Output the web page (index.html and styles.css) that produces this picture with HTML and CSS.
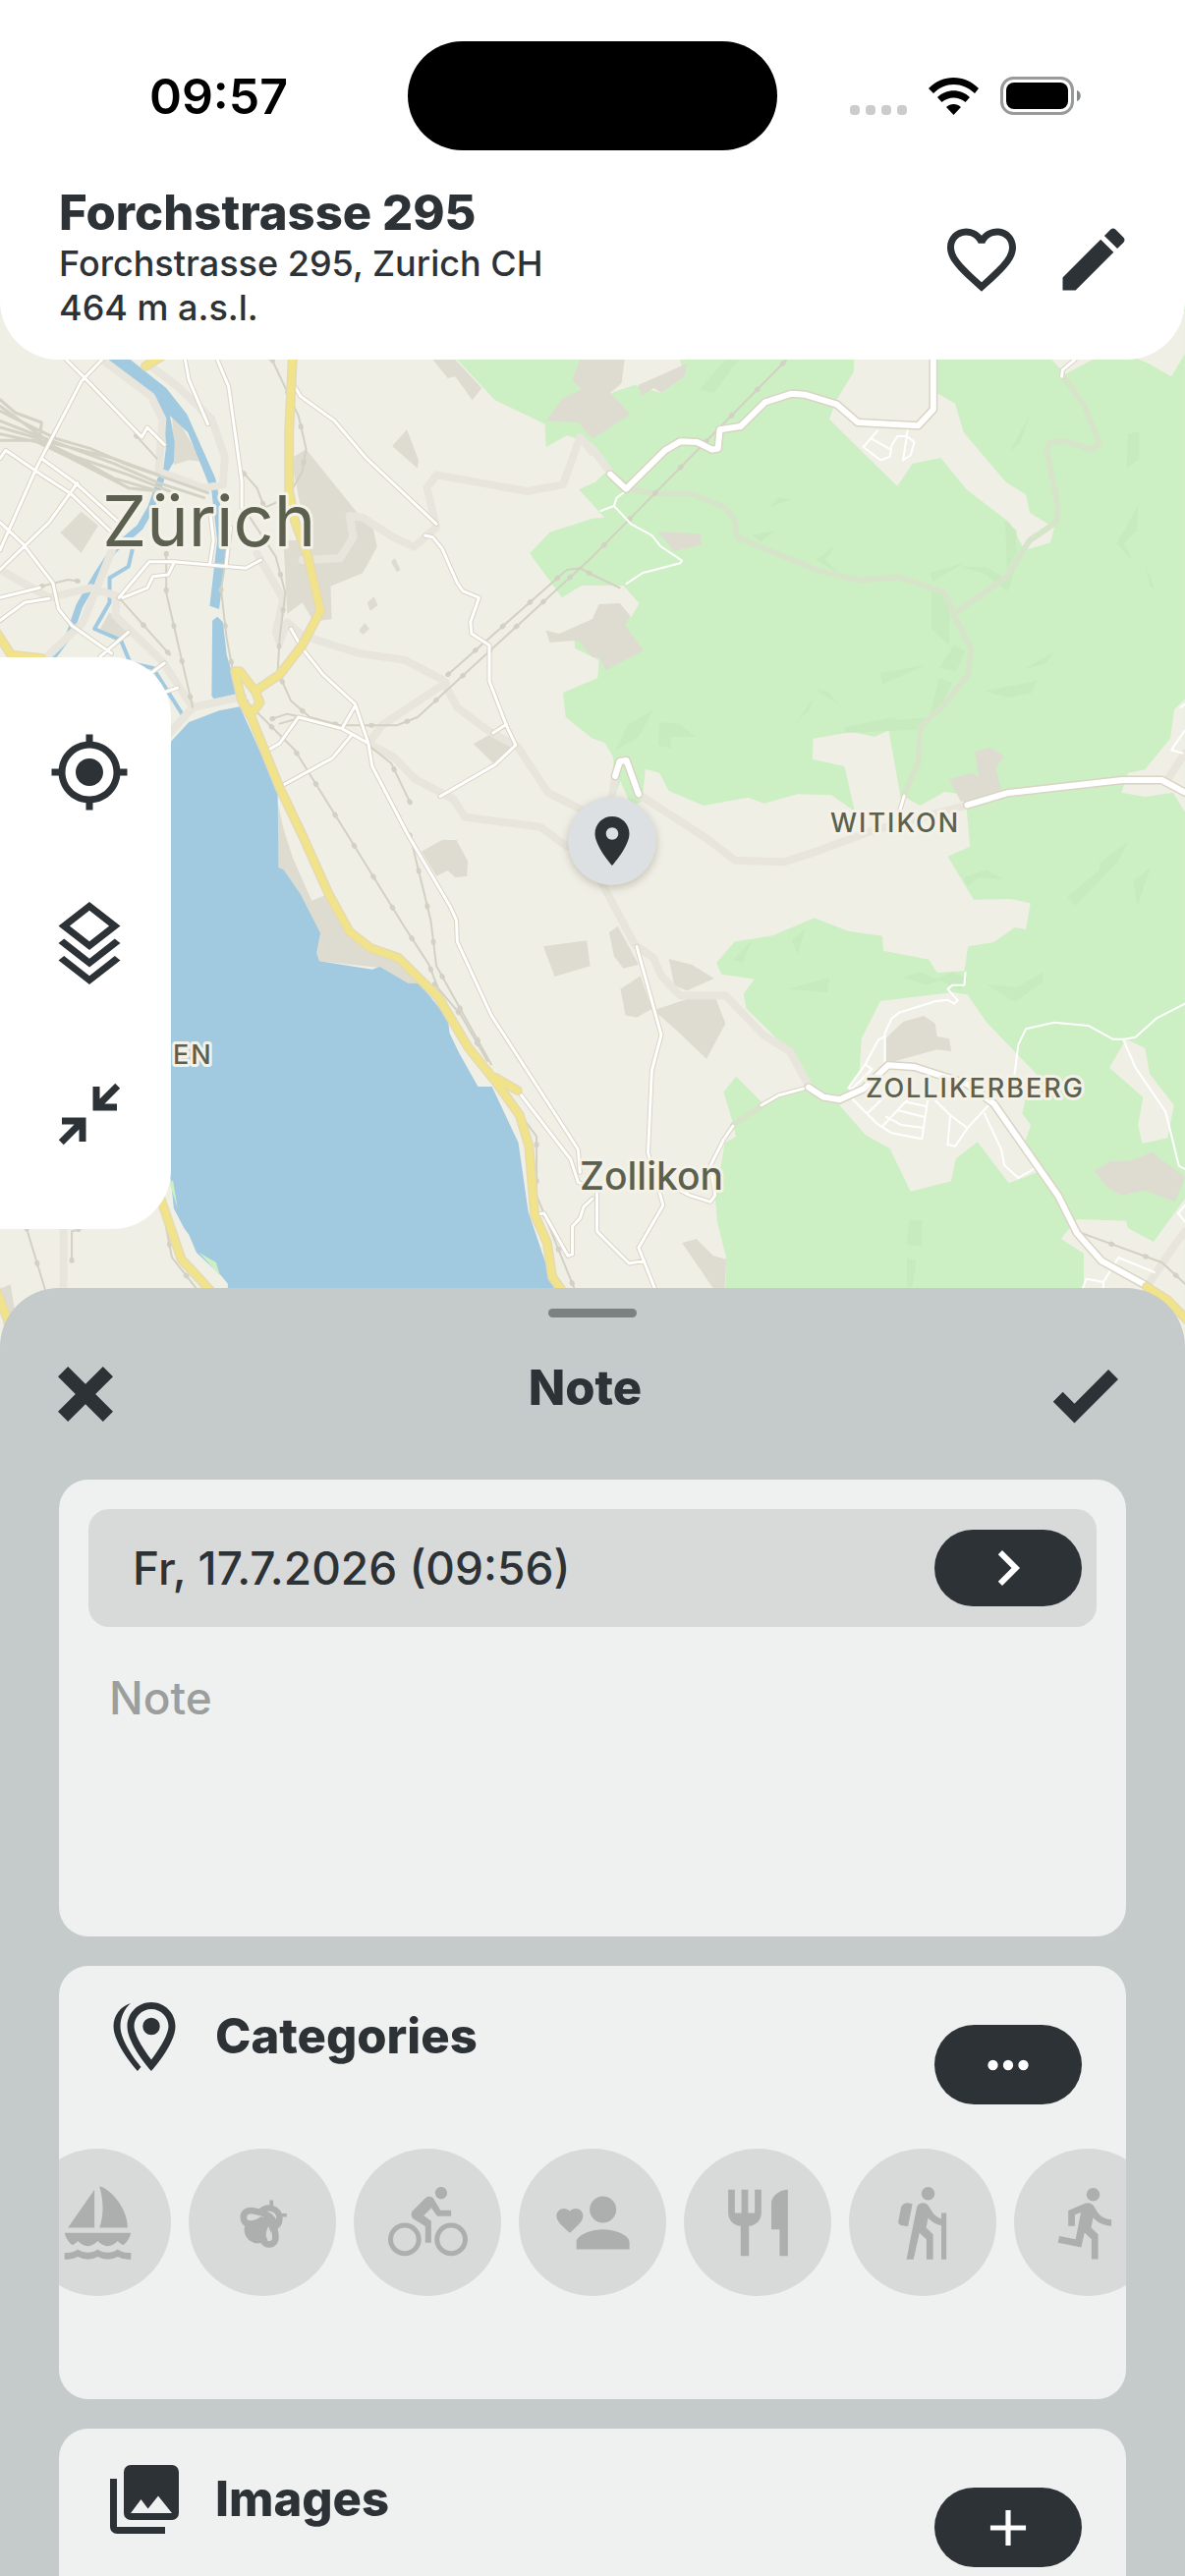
FILE: index.html
```html
<!DOCTYPE html>
<html lang="en">
<head>
<meta charset="utf-8">
<meta name="viewport" content="width=device-width, initial-scale=1">
<title>Note</title>
<link rel="stylesheet" href="styles.css">
</head>
<body>
<div class="app">
  <header class="top">
    <div class="status">
      <span class="status-time">09:57</span>
      <span class="island"></span>
      <div class="status-icons">
        <span class="cell"><i></i><i></i><i></i><i></i></span>
        <svg class="wifi" viewBox="0 0 51 38" aria-hidden="true"><path d="M0 11C14-3.600 37-3.600 51 11l-4 5C34 4 17 4 5 16zM9 20c9-9 24-9 33 0l-4.500 5c-7-6-17-6-24 0zM18 30c4-4 11-4 15 0l-7.500 8z"/></svg>
        <svg class="battery" viewBox="0 0 82 39" aria-hidden="true"><rect x="1.500" y="1.500" width="72" height="36" rx="12" fill="none" stroke="#999b9b" stroke-width="3"/><rect x="6" y="6" width="63" height="27" rx="8"/><path d="M78 14c5 1 5 10 0 11z" fill="#85898a"/></svg>
      </div>
    </div>
    <div class="place">
      <div class="place-text">
        <h1>Forchstrasse 295</h1>
        <p>Forchstrasse 295, Zurich CH</p>
        <p>464 m a.s.l.</p>
      </div>
      <button class="icon-btn" aria-label="Favourite"><svg viewBox="0 0 24 24"><path d="M16.500 3c-1.740 0-3.410.81-4.500 2.090C10.910 3.810 9.240 3 7.500 3 4.420 3 2 5.420 2 8.500c0 3.780 3.400 6.860 8.550 11.540L12 21.350l1.450-1.320C18.600 15.360 22 12.280 22 8.500 22 5.420 19.580 3 16.500 3zm-4.400 15.550l-.1.1-.1-.1C7.140 14.240 4 11.390 4 8.500 4 6.500 5.500 5 7.500 5c1.540 0 3.040.99 3.570 2.360h1.870C13.460 5.990 14.960 5 16.500 5c2 0 3.500 1.500 3.500 3.500 0 2.890-3.140 5.740-7.900 10.050z"/></svg></button>
      <button class="icon-btn" aria-label="Edit"><svg viewBox="0 0 24 24"><path d="M3 17.250V21h3.750L17.810 9.940l-3.750-3.750L3 17.250zM20.710 7.040c.39-.39.39-1.020 0-1.410l-2.340-2.340c-.39-.39-1.020-.39-1.410 0l-1.830 1.830 3.750 3.750 1.830-1.830z"/></svg></button>
    </div>
  </header>

  <section class="map" aria-label="Map">
    <svg class="map-canvas" viewBox="0 306 1206 1065" preserveAspectRatio="xMidYMid slice">
      <defs>
        <g class="geo">
          <path id="rail" d="M720 48 790 220 810 320 800 390 760 470 680 510M645 395 680 440 700 500M440 640V760L480 960 510 1110M315 775 450 950M600 640 585 750 600 900 615 990 650 1090M650 510 730 650 755 760 740 900 735 1000 770 1090 820 1140 900 1165 1050 1165 1105 1140 1568 650M1185 1010 1500 690 1535 685 1568 705 1640 745M650 1090 780 1240 920 1500 1070 1780 1135 1895 1170 2000M1085 1400 1035 1280 980 1230M1085 1500 1140 1760 1155 1900 1300 2200M1150 1955 1220 2050 1290 2190M1375 2350 1420 2420V2600L1520 2885M2140 -20 1568 650M110 740 180 720 210 725M70 2700 120 2890M190 2800V2710L208 2705M430 2640 455 2790 520 2885M2850 2710 3075 2805 3136 2870M360 280 415 350M720 1145 760 1130 800 1140 740 1160"/>
          <path id="local" d="M175 48 225 105 375 285 390 255 435 308M270 48 215 115 100 370 0 630M0 350 15 325 110 400 190 460 290 570 330 600M110 350 200 425 310 540M205 425 130 545 0 690M0 545 60 610 140 730 155 810 190 860 295 945M265 955 340 880M0 775 105 745M0 845 65 790 130 778M490 48 500 110 550 245M575 48 605 130 640 420 640 500M315 775 395 665 460 665 650 685 690 660M325 775 390 745 405 710 445 705 460 670M555 500 565 600 555 675M610 560 598 680M775 120 795 160 885 235 970 350 1155 550M1125 585 1145 590 1170 625 1210 730 1225 755 1268 775 1245 850 1248 885 1295 920V1030L1340 1165 1365 1225 1310 1285 1165 1382M1305 1188 1340 1162M770 870 800 930 855 1010 940 1100 975 1220 985 1290 1080 1500 1190 1715 1208 1760 1210 1825 1300 2050 1530 2460 1535 2530M710 1240 740 1220 790 1140 905 1175 940 1105M905 1175 975 1220M745 1350 880 1265 930 1195M400 1005 435 975M440 1062 470 1050M1370 2280 1510 2490 1530 2560 1568 2580M1568 2610 1545 2635 1535 2670 1515 2695V2780L1503 2785 1440 2655 1425 2657M1685 1840 1750 2110 1725 2220 1715 2470 1755 2630 1690 2760 1735 2890M1580 2590V2710L1610 2745 1665 2808 1705 2800M1800 2585 1825 2600 1880 2620 1893 2600 1880 2510 1915 2430 1940 2388M2015 2325 2060 2295 2140 2270M2845 48 2812 80 2810 100M2380 1430 2393 1380"/>
          <path id="main" d="M1615 398 1657 443 1760 325 1800 298 1845 300 1885 323 1900 320 1905 262 1960 252 2025 178 2095 152 2130 155 2215 185 2270 240 2430 250 2470 200V30M2560 1408 2665 1372 2970 1332H3075L3136 1370M2140 2270 2180 2300 2222 2308 2285 2275 2350 2203 2420 2208 2560 2260 2630 2320 2800 2600 2850 2715 2915 2800 3040 2880M1628 1320 1640 1275 1658 1272 1690 1375"/>
          <path id="artery" d="M775 30 765 270V450L780 540 815 650 848 815 800 920 740 1010 675 1060 688 1095 665 1130 640 1090 622 1000 635 1000 675 1060M640 1090 665 1140 740 1355 800 1500 870 1680 925 1795 980 1845 1055 1875 1160 1995 1240 2150 1310 2250 1375 2355 1400 2450 1415 2660 1448 2745 1462 2850 1490 2895M1310 2240 1370 2280M425 2610 480 2795 560 2895M-10 2890 30 3010M-10 880 30 950 110 960M385 68 440 30M3035 2880 3090 2920 3150 2990"/>
        </g>
      </defs>
      <g class="geo" transform="translate(0 350) scale(.38455 .33333)">
        <!-- forest -->
        <path class="wood" d="M1210-140V48L1310 172 1442 245 1445 316 1500 280 1568 305 1605 390 1575 422 1532 445 1600 530 1568 533 1455 575 1402 640 1487 775 1540 738 1650 738 1692 793 1670 835 1580 830 1520 905 1522 930 1585 965 1582 1020 1490 1065 1497 1140 1568 1205 1600 1217 1622 1260 1628 1380 1642 1335 1672 1415 1700 1395 1708 1298 1745 1310 1770 1365 1862 1410 1980 1385 2023 1403 2110 1375 2200 1378 2262 1427 2235 1290 2150 1268 2152 1205 2255 1185 2315 1200 2352 1180 2382 1375 2435 1410 2500 1368 2540 1375 2558 1420 2567 1535 2508 1565 2577 1697 2675 1695 2727 1708 2715 1788 2685 1782 2630 1827 2562 1840 2552 1915 2480 1920 2458 1880 2338 1853 2335 1808 2245 1793 2155 1753 2045 1807 1945 1825 1896 1890 1910 1925 1996 1940 1968 1985 1975 2030 2090 2160 2145 2262 2060 2290 2018 2318 1948 2237 1915 2285 1940 2380 1948 2420 1918 2440 1893 2610 1898 2680 1922 2790 1915 3100H3136V-140z"/>
        <path class="land" d="M1795 30 1812 100 1750 150 1680 125 1568 170V30zM2260-60V85L2212 175 2195 230 2375 435 2415 365 2490 348 2558 445 2672 545 2712 630 2780 607 2790 562 2725 515 2715 460 2662 422 2550 270 2528 183 2480 150V-60zM2760 20 2820 92 2920 30zM2990 35 3040 60 3100 100 3136 30V-100zM3136 1085 3108 1115 3097 1205 3030 1300 2985 1310 2968 1370 3030 1383 3105 1370 3136 1430zM2330 2007 2520 1980 2560 1987 2610 2070 2745 2233 2715 2300 2705 2350 2728 2385 2712 2440 2745 2530 2670 2563 2587 2437 2530 2488 2517 2557 2410 2588 2355 2457 2290 2415 2222 2325 2275 2220 2280 2120zM2980 2123 3030 2150 3043 2230 3107 2325 3090 2425 3023 2442 3012 2385 3025 2300 2936 2210zM2868 2778 2808 2732 2850 2673 2980 2678 2985 2700 3053 2742 3136 2610V3100H2868z"/>
        <path class="relief" d="M1850 140 1920 48H1955L1890 150zM2672 330 2725 215 2700 300zM2985 275 3015 268V350L2982 380zM2160 660 2210 615 2185 660 2225 705zM2460 700 2550 670 2470 725zM2540 680H2610L2660 715 2685 690 2668 755 2600 700zM2465 740 2515 770 2512 920 2465 870zM2525 920 2555 940 2530 1000 2485 990zM2330 1005 2450 980 2335 1040zM2708 995 2790 940 2770 975zM2605 1060 2745 1028 2730 1065 2670 1080zM2485 1020 2520 1035 2480 1130 2430 1178 2235 1188 2235 1170 2370 1140V1150L2460 1140zM1630 1240 1660 1165 1730 1115 1690 1200zM1745 1155 1800 1160 1840 1200H1775V1235L1742 1225zM2955 610 3012 495 3008 570 2975 610 3000 665zM3030 670 3055 745H3045zM2660 540 2690 570V640L2665 690zM1990 585 2050 570 2015 605zM2035 500 2060 470 2095 475zM2108 1155 2150 1085 2145 1115zM2155 1050 2195 1065 2222 1105zM2825 1690 2910 1605V1585L2985 1520 2960 1580 2845 1715zM3000 1640 3045 1598 3010 1720zM2550 1630 2610 1605 2655 1635 2590 1630 2560 1655zM2390 1935 2435 1918 2480 1940 2520 1918 2560 1940 2540 1975 2490 1945 2450 1958zM2610 1955 2690 1965 2760 1920V1950L2685 2010zM1940 1880 1990 1820 1965 1890zM2095 1820 2132 1785 2110 1865zM2085 1970 2195 1935 2190 1980zM2405 2680 2440 2675V2755L2400 2750zM2400 2790 2425 2800 2415 2880H2400z"/>
        <!-- built-up blocks -->
        <path class="block" d="M1540 30H1655L1645 120 1615 150 1668 215 1568 290 1530 240 1445 235 1490 165 1540 140 1515 110zM1690 125 1818 60 1812 100 1750 150 1730 135 1697 160zM1145 48H1205L1275 135 1250 172 1205 100 1185 105zM1038 312 1077 262 1108 356 1105 380zM770 350 810 322 945 515 985 550 998 620 960 700 875 740 878 840 830 848 800 790 760 825 750 600 790 600 820 640zM215 512 260 555 215 638 160 577zM455 200 535 360 500 355 460 370zM1445 875 1480 885 1568 840 1585 795 1640 792 1668 830 1655 860 1703 937 1603 997 1585 957H1568L1530 905 1455 912zM1740 573 1853 580 1858 613 1785 633zM2512 1330 2568 1310 2590 1320 2580 1245 2620 1232 2658 1260 2635 1295 2652 1370 2543 1398zM1253 1222 1300 1190 1360 1230 1305 1280zM972 790 990 772 1000 798 980 815zM950 875 965 853 978 870 960 888zM1035 665 1045 655 1060 690 1050 697zM1115 1550 1170 1515H1208L1238 1580 1236 1625 1205 1630 1185 1608 1155 1625zM1438 1840 1553 1822 1562 1900 1468 1932zM735 1400 750 1480 775 1570 825 1700 870 1680 930 1800 1060 1880 1115 1952H1080L1005 1905 845 1885 838 1860 848 1800 800 1720 750 1605 732 1602zM1770 1878 1830 1895 1890 1938 1818 1975 1785 1960zM1612 1797 1635 1778 1690 1895 1650 1907 1625 1870zM1642 1970 1695 1930 1725 2030 1685 2057 1655 2050zM1730 2035 1820 2000H1895L1920 2075 1870 2183 1785 2090zM1805 2745 1843 2733 1888 2785 1922 2795 1918 2885H1888zM2345 2120 2390 2070 2445 2052 2475 2075 2480 2115 2512 2122 2518 2160 2480 2155 2370 2190H2345zM2896 2525 2940 2495H2992L3048 2468 3136 2545 3110 2620 3030 2585 2968 2600 2930 2575zM0 2885 28 2872 40 2960 10 3000zM265 870 290 820 345 890 320 905z"/>
        <!-- water -->
        <path class="water" d="M452 1215 500 1155 580 1120 635 1108 735 1365 737 1600 750 1605 795 1680 848 1800 838 1860 845 1885 985 1910 1005 1902 1080 1952H1110L1185 2060 1190 2105 1215 2165 1265 2268H1302L1372 2440 1398 2650 1467 2885V3000H603V2870L585 2845 520 2775 500 2720 487 2700 460 2640 452 2550 300 2500V1300zM285 48H345L440 135 495 215 570 410 580 470 600 630 580 810 555 800 575 600 560 450 497 270 450 220 462 300 460 360 445 390 432 385 440 310 432 215 380 140zM562 845 575 833 590 850 600 950 632 1075 572 1093 560 1075z"/>
        <path class="stream" d="M425 415 400 500 370 560 300 630 260 700 210 800 185 885 140 955"/>
        <path class="brook" d="M350 630 340 680 290 715V790L250 870 320 905 345 975 405 990 490 1145"/>
        <path class="wood" d="M527 2775 572 2805 582 2845 555 2810zM448 2560 458 2555 470 2640z"/>
        <!-- pale through roads -->
        <path class="pale" d="M270 48 400 160 430 230 420 390 540 440 590 430 595 345 560 230 470 130 400 70M0 690 130 775 240 745 310 770 305 830 430 970 510 1110 630 1080M300 620 220 850 120 960M510 1110 440 1200M680 640 750 780 730 880 740 910 760 850 800 890 950 945 1070 965 1170 1025 1210 1110 1290 1180 1370 1230 1450 1370 1568 1440M1180 1035 1010 1165 975 1220 1040 1260 1100 1330 1200 1390 1230 1445 1430 1475 1500 1535M1535 285 1568 330M1535 285 1490 430 1395 450 1155 400 1130 440 1155 560 1095 620 1040 590 960 530 925 525 935 590 900 655 800 660M1568 320 1620 400M1690 1375 1870 1510 1945 1577 2075 1582 2160 1550 2300 1490 2560 1408M1620 1380 1628 1320M1590 1640 1680 1835 1730 1875 1750 1930 1800 1990 1920 1990 2020 2110 2090 2160 2140 2265M3136 1250 3090 1330M168 2700V2890M3040 2870 3110 2750 3136 2710"/>
        <path class="pale wood-road" d="M1657 443 1740 458 1830 458 1920 500 1945 540 1950 590 2160 690 2270 722 2380 712 2500 760 2525 830 2570 930 2562 1010 2500 1100 2435 1170 2430 1280 2390 1380M2812 95 2870 190 2910 305 2890 322 2820 298 2780 300 2770 320 2800 500 2795 545 2725 600 2665 710 2525 825M1940 2385 2018 2325"/>
        <!-- rail yard and rail lines -->
        <path class="yard" d="M0 170 40 210 110 240 105 290M0 205 100 262 150 290 240 320 340 370 440 410 550 455M0 235 110 285 300 365 420 425 540 470M0 255 90 285 200 345 340 400 470 460M0 275 100 300 230 365 300 410 420 450M0 295H90L180 345 340 440 420 450M0 190 60 240 130 300 300 350 420 400"/>
        <use href="#rail" class="rail"/>
        <use href="#rail" class="rail-node"/>
        <!-- local roads -->
        <use href="#local" class="case"/>
        <use href="#local" class="fill"/>
        <path class="lane" d="M1650 455 1632 470 1625 495 1590 510M1625 495 1670 550 1725 585 1748 618 1805 662 1800 670 1700 700 1658 732M2322 265 2285 315 2330 355 2355 345 2360 310 2375 282H2400L2420 300 2410 340 2390 355 2402 265M2307 290 2358 323M2555 1920 2552 1958H2520L2508 1970 2535 2005 2525 2015 2508 2003 2475 2008 2380 2042 2360 2060 2342 2105V2195M2342 2115 2325 2125 2290 2200 2245 2272 2255 2275 2308 2215 2290 2200M2255 2305 2320 2380 2360 2410 2440 2428 2455 2310M2295 2350 2340 2300M2335 2390 2400 2310M2345 2360 2385 2385 2440 2393M2375 2340 2445 2360M2400 2315 2450 2328M2475 2310 2515 2355 2508 2445 2528 2450 2560 2395 2620 2320M2515 2355 2560 2395M2605 2350 2650 2460 2658 2508 2695 2547 2735 2520M2685 2230 2695 2140 2715 2092 2790 2072 2880 2082 2945 2123H2975L3005 2117 3060 2060 3136 2015M2973 2125 3005 2210 3085 2345 3120 2510 3136 2520M3136 1100 3125 1110M3136 1180 3100 1240 3130 1250M2865 2885 2875 2855 2920 2865 2960 2790 3055 2835M2920 2865V2885M3136 2630 3118 2655 3136 2680"/>
        <!-- main roads -->
        <use href="#main" class="main-case"/>
        <use href="#main" class="main"/>
        <use href="#artery" class="artery-case"/>
        <use href="#artery" class="artery"/>
      </g>
      <g class="labels">
        <text class="city" x="104" y="556">Zürich</text>
        <text class="town" x="590" y="1211">Zollikon</text>
        <text class="district" x="845" y="847">WITIKON</text>
        <text class="district" x="881" y="1117">ZOLLIKERBERG</text>
        <text class="district" x="176" y="1083">EN</text>
      </g>
    </svg>
    <nav class="tools" aria-label="Map tools">
      <button aria-label="My location"><svg viewBox="0 0 24 24"><path d="M12 8c-2.210 0-4 1.790-4 4s1.790 4 4 4 4-1.790 4-4-1.790-4-4-4zm8.940 3c-.46-4.170-3.770-7.480-7.940-7.940V1h-2v2.060C6.830 3.520 3.520 6.830 3.060 11H1v2h2.060c.46 4.170 3.770 7.480 7.940 7.940V23h2v-2.060c4.170-.46 7.480-3.770 7.940-7.940H23v-2h-2.060zM12 19c-3.870 0-7-3.130-7-7s3.130-7 7-7 7 3.130 7 7-3.130 7-7 7z"/></svg></button>
      <button aria-label="Layers"><svg viewBox="0 0 24 24"><path d="M12 0 3 7 4.630 8.270 12 14 19.360 8.270 21 7 12 0M12 2.530 17.740 7 12 11.470 6.260 7 12 2.530M3 12 12 19 21 12 19.370 10.730 12 16.470 4.630 10.740 3 12M3 17 12 24 21 17 19.370 15.730 12 21.470 4.630 15.740 3 17"/></svg></button>
      <button aria-label="Shrink map"><svg viewBox="0 0 24 24"><path d="M19.500 3.090 15 7.590V4H13V11H20V9H16.410L20.910 4.500 19.500 3.090M4 13V15H7.590L3.090 19.500 4.500 20.910 9 16.410V20H11V13H4Z"/></svg></button>
    </nav>
    <button class="pin" aria-label="Selected place"><svg viewBox="0 0 24 24"><path d="M12 2C8.130 2 5 5.130 5 9c0 5.250 7 13 7 13s7-7.750 7-13c0-3.870-3.130-7-7-7zm0 9.500c-1.380 0-2.500-1.120-2.500-2.500s1.120-2.500 2.500-2.500 2.500 1.120 2.500 2.500-1.120 2.500-2.500 2.500z"/></svg></button>
  </section>

  <main class="sheet">
    <div class="handle"></div>
    <div class="sheet-head">
      <button class="icon-btn" aria-label="Cancel"><svg viewBox="0 0 24 24"><path d="M20 6.910 17.090 4 12 9.090 6.910 4 4 6.910 9.090 12 4 17.090 6.910 20 12 14.910 17.090 20 20 17.090 14.910 12 20 6.910Z"/></svg></button>
      <h2>Note</h2>
      <button class="icon-btn" aria-label="Save"><svg viewBox="0 0 24 24"><path d="M9 20.420 2.790 14.210 5.620 11.380 9 14.770 18.880 4.880 21.710 7.710 9 20.420Z"/></svg></button>
    </div>

    <section class="card note-card">
      <div class="date-row">
        <span>Fr, 17.7.2026 (09:56)</span>
        <button class="pill" aria-label="Change date"><svg class="chevron" viewBox="0 0 24 24"><path d="M8.590 16.580 13.170 12 8.590 7.410 10 6 16 12 10 18 8.590 16.580Z"/></svg></button>
      </div>
      <textarea aria-label="Note" placeholder="Note"></textarea>
    </section>

    <section class="card">
      <div class="card-head">
        <svg class="card-icon" viewBox="0 0 24 24" aria-hidden="true"><path d="M14 11.500A2.500 2.500 0 0 0 16.500 9 2.500 2.500 0 0 0 14 6.500 2.500 2.500 0 0 0 11.500 9 2.500 2.500 0 0 0 14 11.500M14 4C16.760 4 19 6.240 19 9 19 10.880 17.120 14.680 14 18.680 10.880 14.680 9 10.880 9 9 9 6.240 11.240 4 14 4M14 2C10.130 2 7 5.130 7 9 7 14.250 14 22 14 22S21 14.250 21 9C21 5.130 17.870 2 14 2M5 9C5 13.500 10.080 19.660 11 20.810L10 22C10 22 3 14.250 3 9 3 5.830 5.110 3.150 8 2.290 6.160 3.940 5 6.330 5 9Z"/></svg>
        <h2>Categories</h2>
        <button class="pill" aria-label="More categories"><svg viewBox="0 0 24 24"><path d="M16 12A2 2 0 0 1 18 10 2 2 0 0 1 20 12 2 2 0 0 1 18 14 2 2 0 0 1 16 12M10 12A2 2 0 0 1 12 10 2 2 0 0 1 14 12 2 2 0 0 1 12 14 2 2 0 0 1 10 12M4 12A2 2 0 0 1 6 10 2 2 0 0 1 8 12 2 2 0 0 1 6 14 2 2 0 0 1 4 12Z"/></svg></button>
      </div>
      <div class="chips">
        <button aria-label="Sailing"><svg viewBox="0 0 24 24"><path d="M11 13.500V2L3 13.500h8zM21 13.500C21 6.500 14.500 1 12.500 1c0 0 1 3 1 6.500s-1 6-1 6H21zM22 15H2c.31 1.530 1.160 2.840 2.330 3.730C4.980 18.460 5.550 18.010 6 17.500 6.730 18.340 7.800 19 9 19s2.270-.66 3-1.500c.73.84 1.800 1.500 3 1.500s2.260-.66 3-1.500c.45.51 1.020.96 1.670 1.230C20.840 17.840 21.690 16.530 22 15zM22 23v-2h-1c-1.040 0-2.080-.35-3-1-1.830 1.300-4.170 1.300-6 0-1.830 1.300-4.170 1.300-6 0-.91.65-1.960 1-3 1H2v2h1c1.030 0 2.050-.25 3-.75 1.890 1 4.110 1 6 0 1.890 1 4.110 1 6 0 .95.5 1.970.75 3 .75h1z"/></svg></button>
        <button aria-label="Insects"><svg viewBox="0 0 24 24"><circle cx="10.500" cy="14.100" r="4.100"/><g fill="none" stroke="currentColor"><path stroke-width="2" d="M6.200 10.300c0-2 2-2.300 3.700-1.700 1.900.5 3.900.7 4.700 2.200-2.600.5-4.600 1.700-6.600 1.600-1.200-.1-1.800-.9-1.800-2.100z"/><path stroke-width="2" d="M13.500 11.500c.6-1 1.500-.9 1.600.2.100 1.800.8 3 .7 4.700a1.900 1.900 0 0 1-3.800.4c-.2-1.800.6-3.700 1.500-5.300z"/><path stroke-width="1.900" d="M11.200 8.800c1.700-2.300 6-1.300 5.800 2 0 1.100-.5 1.900-1.200 2.300"/><path stroke-width="1.100" d="M14.600 5.200v2M17 9.700h2.200"/></g><path fill="#d8dad9" d="M7.300 10.500c0-1.200 1.200-1.300 2.200-1 .8.300 1.500.5 2.200.4-1 .8-2.100 1.300-3.300 1.400-.7 0-1.100-.3-1.100-.8zM13.700 13c.3 1.100 1.200 2.300.9 3.400-.3.800-1.500.7-1.600-.2-.1-1.100.2-2.300.7-3.200z"/></svg></button>
        <button aria-label="Cycling"><svg viewBox="0 0 24 24"><path d="M5 20.500A3.500 3.500 0 0 1 1.500 17 3.500 3.500 0 0 1 5 13.500 3.500 3.500 0 0 1 8.500 17 3.500 3.500 0 0 1 5 20.500M5 12A5 5 0 0 0 0 17 5 5 0 0 0 5 22 5 5 0 0 0 10 17 5 5 0 0 0 5 12M14.800 10H19V8.200H15.800L13.860 4.930C13.570 4.430 13 4.100 12.400 4.100 11.930 4.100 11.500 4.290 11.200 4.600L7.500 8.290C7.190 8.600 7 9 7 9.500 7 10.130 7.330 10.660 7.850 10.970L11.200 13V18H13V11.500L10.750 9.850 13.070 7.500M19 20.500A3.500 3.500 0 0 1 15.500 17 3.500 3.500 0 0 1 19 13.500 3.500 3.500 0 0 1 22.500 17 3.500 3.500 0 0 1 19 20.500M19 12A5 5 0 0 0 14 17 5 5 0 0 0 19 22 5 5 0 0 0 24 17 5 5 0 0 0 19 12M16 4.800C17 4.800 17.800 4 17.800 3 17.800 2 17 1.200 16 1.200 15 1.200 14.200 2 14.200 3 14.200 4 15 4.800 16 4.800Z"/></svg></button>
        <button aria-label="Dating"><svg viewBox="0 0 24 24"><path d="M15 14C12.300 14 7 15.300 7 18V20H23V18C23 15.300 17.700 14 15 14M15 12A4 4 0 0 0 19 8 4 4 0 0 0 15 4 4 4 0 0 0 11 8 4 4 0 0 0 15 12M5 15 4.400 14.500C2.400 12.600 1 11.400 1 9.900 1 8.700 2 7.700 3.200 7.700 3.900 7.700 4.600 8 5 8.500 5.400 8 6.100 7.700 6.800 7.700 8 7.700 9 8.600 9 9.900 9 11.400 7.600 12.600 5.600 14.500L5 15Z"/></svg></button>
        <button aria-label="Food"><svg viewBox="0 0 24 24"><path d="M11 9H9V2H7V9H5V2H3V9C3 11.120 4.660 12.840 6.750 12.970V22H9.250V12.970C11.340 12.840 13 11.120 13 9V2H11V9M16 6V14H18.500V22H21V2C18.240 2 16 4.240 16 6Z"/></svg></button>
        <button aria-label="Hiking"><svg viewBox="0 0 24 24"><path d="M13.500 5.200c1.100 0 2-.9 2-2s-.9-2-2-2-2 .9-2 2 .9 2 2 2zM17.500 10.780c-1.230-.37-2.220-1.170-2.800-2.180l-1-1.600c-.41-.65-1.110-1-1.840-1-.78 0-1.590.5-1.780 1.440S7 23 7 23h2.100l1.800-8 2.100 2v6h2v-7.500l-2.100-2 .6-3c1 1.150 2.410 2.010 4 2.340V23H19V9h-1.500v1.780zM7.430 13.130l-2.120-.41c-.54-.11-.9-.63-.79-1.170l.76-3.930c.21-1.080 1.260-1.790 2.340-1.580l1.160.23-1.350 6.860z"/></svg></button>
        <button aria-label="Running"><svg viewBox="0 0 24 24"><path d="M13.490 5.480c1.100 0 2-.9 2-2s-.9-2-2-2-2 .9-2 2 .9 2 2 2zm-3.600 13.900l1-4.400 2.100 2v6h2v-7.500l-2.100-2 .6-3c1.300 1.500 3.300 2.500 5.500 2.500v-2c-1.900 0-3.500-1-4.300-2.400l-1-1.600c-.4-.6-1-1-1.700-1-.3 0-.5.1-.8.1l-5.200 2.200v4.700h2v-3.400l1.800-.7-1.600 8.100-4.900-1-.4 2 7 1.400z"/></svg></button>
      </div>
    </section>

    <section class="card">
      <div class="card-head">
        <svg class="card-icon" viewBox="0 0 24 24" aria-hidden="true"><path d="M22 16V4A2 2 0 0 0 20 2H8A2 2 0 0 0 6 4V16A2 2 0 0 0 8 18H20A2 2 0 0 0 22 16M11 12 13.030 14.710 16 11 20 16H8M2 6V20A2 2 0 0 0 4 22H18V20H4V6"/></svg>
        <h2>Images</h2>
        <button class="pill" aria-label="Add image"><svg viewBox="0 0 24 24"><path d="M19 13H13V19H11V13H5V11H11V5H13V11H19V13Z"/></svg></button>
      </div>
    </section>
  </main>
</div>
</body>
</html>
```

FILE: styles.css
```css
:root {
  --ink: #2d3236;
  --sheet: #c5cbcb;
  --card: #eff1f1;
  --field: #d8dad9;
  --muted: #adafae;
}

* { box-sizing: border-box; }

body {
  margin: 0;
  font-family: Inter, "Liberation Sans", sans-serif;
  color: var(--ink);
}

h1, h2, p { margin: 0; }

h1, h2 {
  font-size: 49px;
  font-weight: 800;
}

button {
  padding: 0;
  border: 0;
  background: none;
  color: inherit;
  font: inherit;
}

svg { display: block; fill: currentColor; }

.app {
  display: flex;
  flex-direction: column;
  height: 100vh;
}

/* top bar */
.top {
  position: relative;
  z-index: 1;
  padding-bottom: 30px;
  border-radius: 0 0 60px 60px;
  background: #fff;
}

.status {
  display: grid;
  grid-template-columns: 1fr 376px 1fr;
  align-items: center;
  padding: 42px 0 39px;
  color: #000;
}

.status-time {
  padding-left: 30px;
  font-size: 50px;
  font-weight: 600;
  line-height: 60px;
  text-align: center;
}

.island {
  height: 111px;
  border-radius: 56px;
  background: #000;
}

.status-icons {
  display: flex;
  justify-content: flex-end;
  align-items: flex-end;
  gap: 22px;
  padding-right: 106px;
}

.cell { display: flex; gap: 6px; }

.cell i {
  width: 10px;
  height: 10px;
  border-radius: 4px;
  background: #cbcdcc;
}

.wifi { width: 51px; height: 38px; }
.battery { width: 82px; height: 39px; }

.place {
  display: flex;
  align-items: center;
  gap: 30px;
  padding: 0 51px 0 60px;
}

.place-text { flex: 1; }

.place h1 {
  margin-bottom: 4px;
  line-height: 50px;
}

.place p {
  font-size: 36px;
  font-weight: 500;
  line-height: 45px;
}

.icon-btn svg, .tools svg, .card-icon {
  width: 84px;
  height: 84px;
}

/* map */
.map {
  position: relative;
  flex: 1;
  min-height: 0;
  margin: -60px 0;
  background: #f0efe6;
}

.map-canvas {
  width: 100%;
  height: 100%;
}

.geo path {
  vector-effect: non-scaling-stroke;
  stroke-linejoin: round;
  stroke-linecap: round;
}

.wood { fill: #cdefc4; }
.land { fill: #f0efe6; }
.relief { fill: #c8eabf; }
.block { fill: #dedcd0; }
.water { fill: #a1c9df; }

.stream, .brook, .rail, .yard, .pale, .case, .fill, .lane,
.main, .main-case, .artery, .artery-case, .rail-node { fill: none; }

.stream { stroke: #a1c9df; stroke-width: 7px; }
.brook { stroke: #a1c9df; stroke-width: 4px; }
.yard { stroke: #d4d2c5; stroke-width: 3px; }
.rail { stroke: #d3d1c3; stroke-width: 2px; }
.rail-node { stroke: #d3d1c3; stroke-width: 5px; stroke-dasharray: 1 36; }
.pale { stroke: #e8e6dc; stroke-width: 8px; }
.wood-road { stroke: #d6e5ca; stroke-width: 6px; }
.case { stroke: #d9d4c3; stroke-width: 5px; }
.fill { stroke: #fff; stroke-width: 3px; }
.lane { stroke: #fff; stroke-width: 2px; }
.main-case { stroke: #d9d4c3; stroke-width: 9px; }
.main { stroke: #fff; stroke-width: 6px; }
.artery-case { stroke: #e6d9b4; stroke-width: 10px; }
.artery { stroke: #f0e389; stroke-width: 7px; }

.labels text {
  fill: #5c614f;
  stroke: #f4f2e8;
  stroke-width: 6px;
  stroke-linejoin: round;
  paint-order: stroke;
  font-weight: 500;
}

.labels .city { font-size: 72px; font-weight: 400; }
.town { font-size: 39px; }
.district { font-size: 27px; letter-spacing: 2px; }

.tools {
  position: absolute;
  top: 363px;
  left: 0;
  display: flex;
  flex-direction: column;
  padding: 30px 0;
  border-radius: 0 60px 60px 0;
  background: #fff;
}

.tools button {
  display: grid;
  place-items: center;
  width: 174px;
  height: 174px;
  padding-left: 8px;
}

.pin {
  position: absolute;
  top: 505px;
  left: 578px;
  display: grid;
  place-items: center;
  width: 90px;
  height: 90px;
  border-radius: 50%;
  background: #dce0e2;
  box-shadow: 0 3px 8px rgba(120, 110, 90, .35);
}

.pin svg { width: 60px; height: 60px; }

/* bottom sheet */
.sheet {
  position: relative;
  z-index: 1;
  height: 50vh;
  padding: 21px 60px 0;
  border-radius: 60px 60px 0 0;
  background: var(--sheet);
  overflow: hidden;
}

.handle {
  width: 90px;
  height: 9px;
  margin: 0 auto 36px;
  border-radius: 5px;
  background: #7b8081;
}

.sheet-head {
  display: flex;
  justify-content: space-between;
  margin: 0 0 45px -15px;
}

.sheet-head h2 { line-height: 72px; }

.card {
  margin-bottom: 30px;
  border-radius: 30px;
  background: var(--card);
  overflow: hidden;
}

.note-card { padding-top: 30px; }

.date-row {
  display: flex;
  align-items: center;
  justify-content: space-between;
  height: 120px;
  margin: 0 30px;
  padding: 0 15px 0 45px;
  border-radius: 21px;
  background: var(--field);
  font-size: 46px;
  font-weight: 500;
}

.date-row .pill { height: 78px; }

textarea {
  display: block;
  width: 100%;
  height: 315px;
  padding: 42px 51px;
  border: 0;
  background: none;
  color: var(--ink);
  font: 500 46px/60px Inter, "Liberation Sans", sans-serif;
  resize: none;
}

textarea::placeholder { color: #9c9e9e; }

.pill {
  display: grid;
  place-items: center;
  width: 150px;
  height: 81px;
  border-radius: 41px;
  background: var(--ink);
  color: #fff;
}

.pill svg { width: 62px; height: 62px; }
.pill .chevron { width: 72px; height: 72px; }

.card-head {
  display: flex;
  gap: 30px;
  padding: 30px 45px 45px;
}

.card-head h2 {
  flex: 1;
  line-height: 84px;
}

.card-head .pill { margin-top: 30px; }

.chips {
  display: flex;
  gap: 18px;
  margin-left: -36px;
  padding-bottom: 105px;
}

.chips button {
  display: grid;
  flex: none;
  place-items: center;
  width: 150px;
  height: 150px;
  border-radius: 50%;
  background: var(--field);
  color: var(--muted);
}

.chips svg { width: 81px; height: 81px; }
```
